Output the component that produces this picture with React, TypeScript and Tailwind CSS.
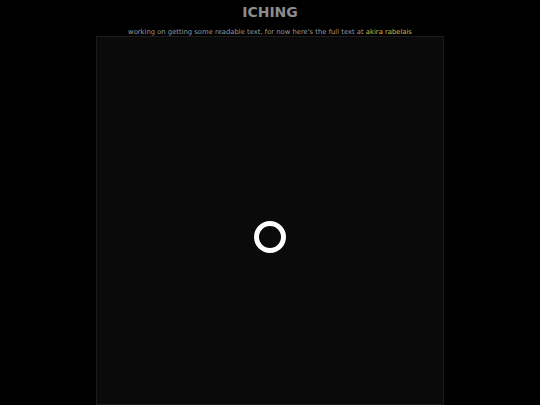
export default function App() {
  return (
    <div
      className="h-[405px] overflow-hidden bg-black flex flex-col items-center"
      style={{ fontFamily: '"DejaVu Sans", sans-serif' }}
    >
      <h1 className="mt-[4px] text-[14px] leading-[16px] font-bold text-[#8c8c8c]">ICHING</h1>
      <p className="mt-[9px] text-[6.8px] leading-[7px] text-[#9a9a9a]">
        working on getting some readable text, for now here's the full text at{' '}
        <a className="text-[#d9b73a]">akira rabelais</a>
      </p>
      <div className="w-[348px] h-[369px] shrink-0 bg-[#0a0a0a] border border-[#1c1c1c] flex justify-center pt-[184px]">
        <div className="w-[32px] h-[32px] rounded-full border-[5px] border-white" />
      </div>
    </div>
  );
}
